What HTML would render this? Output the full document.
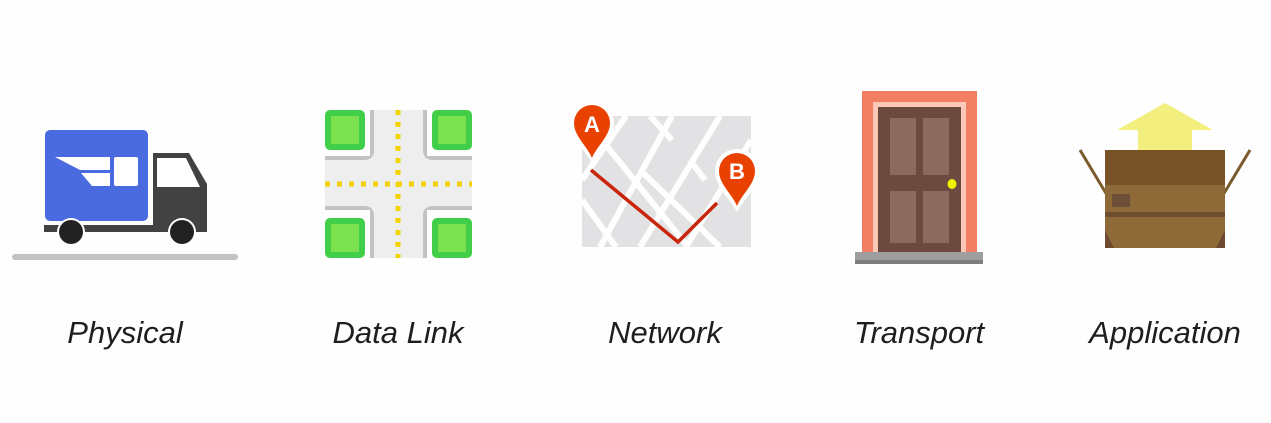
<!DOCTYPE html>
<html><head><meta charset="utf-8"><style>
html,body{margin:0;padding:0;background:#fefefe;}
svg{display:block}
text{font-family:"Liberation Sans",sans-serif;font-style:italic;font-size:31px;fill:#1e1e1e;}
</style></head><body>
<svg width="1271" height="423" viewBox="0 0 1271 423" xmlns="http://www.w3.org/2000/svg">
<rect width="1271" height="423" fill="#fefefe"/>
<!-- Truck -->
<rect x="12" y="254" width="226" height="6" rx="3" fill="#c3c3c3"/>
<path d="M153 153 H189 L207 184 V232 H44 V225 H153 Z" fill="#424242"/>
<path d="M157 158 H186 L200 187 H157 Z" fill="#fff"/>
<rect x="45" y="130" width="103" height="91" rx="5" fill="#4a6be0"/>
<path d="M55 157 H110 V170 H80 Z" fill="#fff"/>
<path d="M81 173 H110 V186 H92 Z" fill="#fff"/>
<rect x="114" y="157" width="24" height="29" rx="2" fill="#fff"/>
<circle cx="71" cy="232" r="14" fill="#fff"/><circle cx="71" cy="232" r="12" fill="#222"/>
<circle cx="182" cy="232" r="14" fill="#fff"/><circle cx="182" cy="232" r="12" fill="#222"/>
<!-- Data Link -->
<rect x="325" y="110" width="147" height="148" fill="#eeeeee"/>
<path d="M372 110 V150 Q372 158 364 158 H325" fill="none" stroke="#c2c2c2" stroke-width="4"/>
<path d="M425 110 V150 Q425 158 433 158 H472" fill="none" stroke="#c2c2c2" stroke-width="4"/>
<path d="M372 258 V216 Q372 208 364 208 H325" fill="none" stroke="#c2c2c2" stroke-width="4"/>
<path d="M425 258 V216 Q425 208 433 208 H472" fill="none" stroke="#c2c2c2" stroke-width="4"/>
<path d="M325 110 H370 V156 H325Z M427 110 H472 V156 H427Z M325 210 H370 V258 H325Z M427 210 H472 V258 H427Z" fill="#fefefe"/>
<g fill="#41cf4a"><rect x="325" y="110" width="40" height="40" rx="5"/><rect x="432" y="110" width="40" height="40" rx="5"/><rect x="325" y="218" width="40" height="40" rx="5"/><rect x="432" y="218" width="40" height="40" rx="5"/></g>
<g fill="#7be14e"><rect x="331" y="116" width="28" height="28"/><rect x="438" y="116" width="28" height="28"/><rect x="331" y="224" width="28" height="28"/><rect x="438" y="224" width="28" height="28"/></g>
<line x1="398" y1="110" x2="398" y2="258" stroke="#f3d400" stroke-width="5" stroke-dasharray="5 7"/>
<line x1="325" y1="184" x2="472" y2="184" stroke="#f3d400" stroke-width="5" stroke-dasharray="5 7"/>
<!-- Network -->
<rect x="582" y="116" width="169" height="131" fill="#e2e2e4"/>
<g stroke="#fefefe" stroke-width="6" fill="none">
<path d="M626 116 L582 180"/><path d="M672 116 L600 247"/><path d="M720 116 L640 247"/><path d="M751 140 L686 247"/>
<path d="M602 140 L688 247"/><path d="M582 200 L616 247"/><path d="M650 116 L672 140"/><path d="M640 170 L720 247"/><path d="M690 160 L705 180"/>
</g>
<path d="M591 170 L678 242 L717 203" fill="none" stroke="#c8250a" stroke-width="3.5" stroke-linejoin="miter"/>
<path d="M592 163 C585 150 570 138 570 123 A22 22 0 0 1 614 123 C614 138 599 150 592 163Z" fill="#fefefe"/>
<path d="M592 158 C587 146 574 136 574 123 A18 18 0 0 1 610 123 C610 136 597 146 592 158Z" fill="#e94200"/>
<text x="592" y="132" style="font-style:normal;font-weight:bold;font-size:22px;fill:#fff" text-anchor="middle">A</text>
<path d="M737 212 C730 199 715 186 715 171 A22 22 0 0 1 759 171 C759 186 744 199 737 212Z" fill="#fefefe"/>
<path d="M737 206 C732 194 719 184 719 171 A18 18 0 0 1 755 171 C755 184 742 194 737 206Z" fill="#e94200"/>
<text x="737" y="179" style="font-style:normal;font-weight:bold;font-size:22px;fill:#fff" text-anchor="middle">B</text>
<!-- Transport -->
<rect x="862" y="91" width="115" height="162" fill="#f27e63"/>
<rect x="873" y="102" width="93" height="151" fill="#fbc8b8"/>
<rect x="878" y="107" width="83" height="146" fill="#6c4a3f"/>
<g fill="#8c6a5e"><rect x="890" y="118" width="26" height="57"/><rect x="923" y="118" width="26" height="57"/><rect x="890" y="191" width="26" height="52"/><rect x="923" y="191" width="26" height="52"/></g>
<ellipse cx="952" cy="184" rx="4.5" ry="5" fill="#f0f000"/>
<rect x="855" y="252" width="128" height="10" fill="#9e9e9e"/>
<rect x="855" y="260" width="128" height="4" fill="#7e7e7e"/>
<!-- Application -->
<path d="M1165 103 L1213 130 H1192 V150 H1138 V130 H1117 Z" fill="#f2ef7e"/>
<line x1="1080" y1="150" x2="1107" y2="195" stroke="#7a5a2c" stroke-width="3"/>
<line x1="1250" y1="150" x2="1223" y2="195" stroke="#7a5a2c" stroke-width="3"/>
<rect x="1105" y="150" width="120" height="98" fill="#8e6a38"/>
<rect x="1105" y="150" width="120" height="35" fill="#765226"/>
<rect x="1105" y="212" width="120" height="5" fill="#6f4e30"/>
<rect x="1112" y="194" width="18" height="13" fill="#6d4f3c"/>
<path d="M1105 230 L1114 248 H1105Z M1225 230 L1216 248 H1225Z" fill="#6d4a30"/>
<!-- Labels -->
<text x="125" y="343" text-anchor="middle">Physical</text>
<text x="398" y="343" text-anchor="middle">Data Link</text>
<text x="665" y="343" text-anchor="middle">Network</text>
<text x="919" y="343" text-anchor="middle">Transport</text>
<text x="1165" y="343" text-anchor="middle">Application</text>
</svg>
</body></html>
